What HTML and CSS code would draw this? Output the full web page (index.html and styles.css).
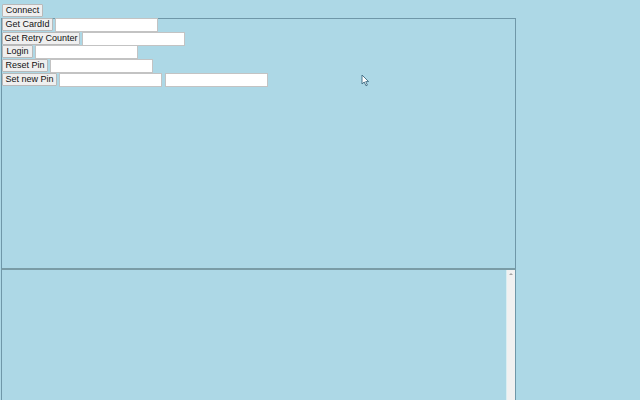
FILE: index.html
```html
<!DOCTYPE html>
<html>
<head>
<meta charset="utf-8">
<link rel="stylesheet" href="styles.css">
</head>
<body>
<div class="top"><button class="btn w-connect">Connect</button></div>
<div class="panel">
  <div class="rows">
    <div class="row"><button class="btn w-cardid">Get CardId</button><input class="field" type="text"></div>
    <div class="row"><button class="btn w-retry">Get Retry Counter</button><input class="field" type="text"></div>
    <div class="row"><button class="btn w-login">Login</button><input class="field" type="text"></div>
    <div class="row"><button class="btn w-reset">Reset Pin</button><input class="field" type="text"></div>
    <div class="row"><button class="btn w-setpin">Set new Pin</button><input class="field" type="text"><input class="field" type="text"></div>
  </div>
</div>
<div class="log">
  <div class="scrollbar"><span class="arrow"></span></div>
</div>
<svg class="cursor" width="9" height="13" viewBox="0 0 9 13"><path d="M1 1 L1 10 L3.2 8 L5 11.8 L6.4 11.1 L4.7 7.6 L7.6 7.6 Z" fill="#fff" stroke="#3d6a80" stroke-width="0.9" stroke-linejoin="round"/></svg>
</body>
</html>
```
FILE: styles.css
```css
html, body {
  margin: 0;
  padding: 0;
  background: #add8e6;
  overflow: hidden;
  height: 400px;
}
body {
  font-family: "Liberation Sans", Arial, sans-serif;
  position: relative;
}
.top {
  display: flex;
  align-items: flex-start;
  padding: 4px 0 0 2px;
  height: 14px;
}
.btn {
  font-family: "Liberation Sans", Arial, sans-serif;
  font-size: 9px;
  color: #111;
  background: #efefef;
  border: 1px solid #b9b9b9;
  border-radius: 1px;
  height: 13px;
  padding: 0;
  margin: 0;
  line-height: 11px;
  text-align: center;
  box-sizing: border-box;
}
.w-connect { width: 41px; }
.w-cardid { width: 51px; }
.w-retry { width: 78px; }
.w-login { width: 31px; }
.w-reset { width: 46px; }
.w-setpin { width: 55px; }
.field {
  width: 103px;
  height: 14px;
  box-sizing: border-box;
  border: 1px solid #c3c3c3;
  background: #fff;
  margin: 0 0 0 2px;
  padding: 0;
}
.field + .field { margin-left: 3px; }
.panel {
  margin-left: 1px;
  width: 515px;
  height: 252px;
  box-sizing: border-box;
  border: 1px solid #6f97a8;
  border-bottom: 2px solid #7a9ca6;
}
.rows {
  margin-top: -1px;
  display: flex;
  flex-direction: column;
  gap: 0.7px;
}
.row {
  display: flex;
  align-items: flex-start;
  height: 13px;
}
.log {
  margin-left: 1px;
  width: 515px;
  height: 140px;
  box-sizing: border-box;
  border-left: 1px solid #6f97a8;
  border-right: 1px solid #6f97a8;
  display: flex;
  justify-content: flex-end;
}
.scrollbar {
  width: 8px;
  height: 100%;
  background: #f1f1f1;
  border-left: 1px solid #d8eef2;
  position: relative;
}
.arrow {
  position: absolute;
  left: 2px;
  top: 3px;
  width: 0;
  height: 0;
  border-left: 2px solid transparent;
  border-right: 2px solid transparent;
  border-bottom: 2px solid #a3a3a3;
}
.cursor {
  position: absolute;
  left: 361px;
  top: 74px;
}
```
